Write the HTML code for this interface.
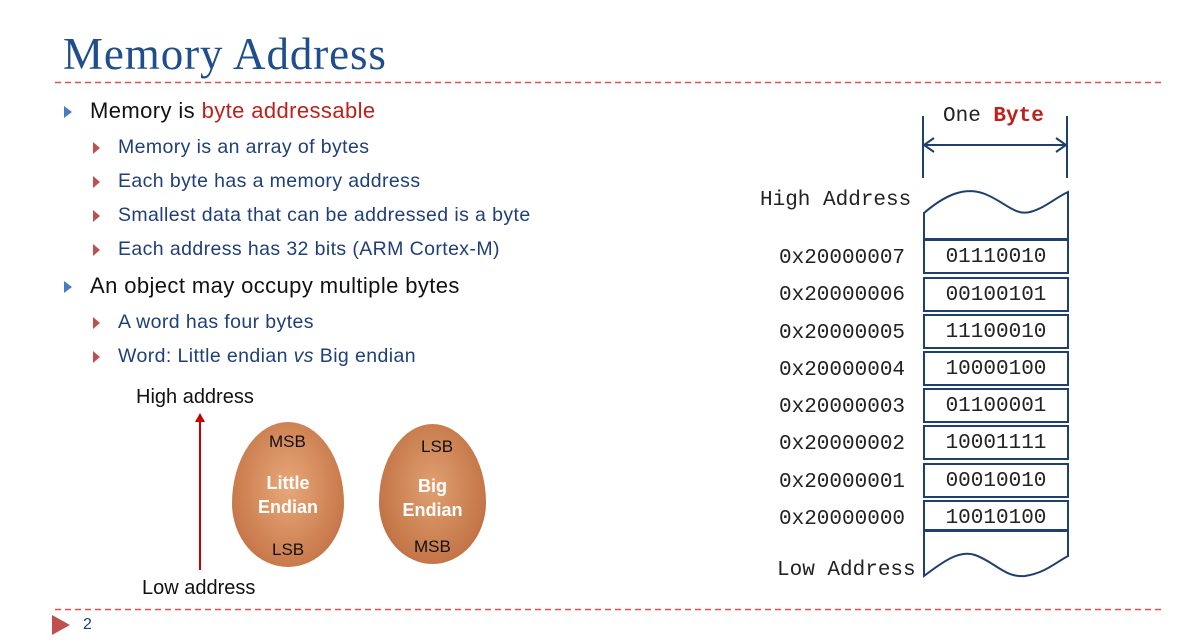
<!DOCTYPE html>
<html><head><meta charset="utf-8"><style>
body{margin:0;width:1190px;height:640px;background:#fff;position:relative;overflow:hidden;font-family:"Liberation Sans",sans-serif}
.a{position:absolute;white-space:nowrap}
.t{font-family:"Liberation Serif",serif;font-size:45px;letter-spacing:0.9px;color:#1f4e8c;left:63px;top:28px}
.l1{font-size:22px;color:#111;letter-spacing:0.4px}
.l2{font-size:19.5px;color:#1f3f7a;letter-spacing:0.4px}
.b1{width:0;height:0;border-top:6px solid transparent;border-bottom:6px solid transparent;border-left:8px solid #4a7cc0}
.b2{width:0;height:0;border-top:6px solid transparent;border-bottom:6px solid transparent;border-left:7px solid #c0504d}
.m{font-family:"Liberation Mono",monospace;font-size:21px;color:#222}
</style></head><body>
<div class="a t">Memory Address</div>

<div class="a b1" style="left:64px;top:106px"></div>
<div class="a l1" style="left:90px;top:98px">Memory is <span style="color:#c0201c">byte addressable</span></div>
<div class="a b2" style="left:93px;top:142px"></div><div class="a l2" style="left:118px;top:136px">Memory is an array of bytes</div>
<div class="a b2" style="left:93px;top:176px"></div><div class="a l2" style="left:118px;top:170px">Each byte has a memory address</div>
<div class="a b2" style="left:93px;top:210px"></div><div class="a l2" style="left:118px;top:204px">Smallest data that can be addressed is a byte</div>
<div class="a b2" style="left:93px;top:244px"></div><div class="a l2" style="left:118px;top:238px">Each address has 32 bits (ARM Cortex-M)</div>
<div class="a b1" style="left:64px;top:281px"></div>
<div class="a l1" style="left:90px;top:273px">An object may occupy multiple bytes</div>
<div class="a b2" style="left:93px;top:317px"></div><div class="a l2" style="left:118px;top:311px">A word has four bytes</div>
<div class="a b2" style="left:93px;top:351px"></div><div class="a l2" style="left:118px;top:345px">Word: Little endian <i>vs</i> Big endian</div>

<div class="a" style="left:136px;top:386px;font-size:20px;color:#111">High address</div>
<div class="a" style="left:142px;top:577px;font-size:20px;color:#111">Low address</div>
<div class="a" style="left:199px;top:420px;width:2px;height:150px;background:#c00"></div>
<div class="a" style="left:195px;top:413px;border-left:5px solid transparent;border-right:5px solid transparent;border-bottom:9px solid #c00"></div>

<div class="a" style="left:232px;top:422px;width:112px;height:145px;border-radius:50% 50% 50% 50%/56% 56% 44% 44%;background:radial-gradient(ellipse at 50% 45%,#e8a87a,#c97a4c 70%,#a95e34)"></div>
<div class="a" style="left:379px;top:424px;width:107px;height:140px;border-radius:50% 50% 50% 50%/56% 56% 44% 44%;background:radial-gradient(ellipse at 50% 45%,#e0a070,#c47648 70%,#a45a30)"></div>
<div class="a" style="left:269px;top:432px;font-size:17px;color:#111">MSB</div>
<div class="a" style="left:272px;top:540px;font-size:17px;color:#111">LSB</div>
<div class="a" style="left:232px;top:471px;width:112px;text-align:center;font-size:18px;font-weight:bold;color:#fff;line-height:24px">Little<br>Endian</div>
<div class="a" style="left:421px;top:437px;font-size:17px;color:#111">LSB</div>
<div class="a" style="left:414px;top:537px;font-size:17px;color:#111">MSB</div>
<div class="a" style="left:379px;top:474px;width:107px;text-align:center;font-size:18px;font-weight:bold;color:#fff;line-height:24px">Big<br>Endian</div>

<div class="a" style="left:52px;top:615px;border-top:10px solid transparent;border-bottom:10px solid transparent;border-left:18px solid #c0504d"></div>
<div class="a" style="left:83px;top:616px;font-size:16px;color:#1f3f7a">2</div>

<div class="a m" style="left:943px;top:105px">One <b style="color:#c0201c">Byte</b></div>
<div class="a m" style="left:760px;top:189px">High Address</div>
<div class="a m" style="left:777px;top:559px">Low Address</div>
<div class="a m" style="left:779px;top:240px;line-height:37.3px">0x20000007<br>0x20000006<br>0x20000005<br>0x20000004<br>0x20000003<br>0x20000002<br>0x20000001<br>0x20000000</div>

<svg class="a" style="left:0;top:0" width="1190" height="640">
<g stroke="#d9534f" stroke-width="1.5" stroke-dasharray="6 4">
<line x1="55" y1="82.5" x2="1162" y2="82.5"/>
<line x1="55" y1="609.5" x2="1162" y2="609.5"/>
</g>
<g fill="none" stroke="#1f3f6f" stroke-width="2">
<line x1="923" y1="116" x2="923" y2="178"/><line x1="1067" y1="116" x2="1067" y2="178"/>
<line x1="924" y1="145" x2="1066" y2="145"/>
<polyline points="934,138 924,145 934,152"/><polyline points="1056,138 1066,145 1056,152"/>
<path d="M924,213 C945,195 965,186 985,194 C1005,202 1015,216 1030,212 C1045,208 1055,198 1068,192 L1068,239 L924,239 Z"/>
<path d="M924,576 C945,560 960,550 975,555 C995,562 1005,578 1025,576 C1045,573 1055,563 1068,556 L1068,530 L924,530 Z"/>
</g>
<g fill="none" stroke="#1f3f6f" stroke-width="2">
<rect x="924" y="240" width="144" height="33"/>
<rect x="924" y="278" width="144" height="33"/>
<rect x="924" y="315" width="144" height="33"/>
<rect x="924" y="352" width="144" height="33"/>
<rect x="924" y="389" width="144" height="33"/>
<rect x="924" y="426" width="144" height="33"/>
<rect x="924" y="464" width="144" height="33"/>
<rect x="924" y="501" width="144" height="30"/>
</g>
<g font-family="Liberation Mono,monospace" font-size="21" fill="#222" text-anchor="middle">
<text x="996" y="262">01110010</text>
<text x="996" y="300">00100101</text>
<text x="996" y="337">11100010</text>
<text x="996" y="374">10000100</text>
<text x="996" y="411">01100001</text>
<text x="996" y="448">10001111</text>
<text x="996" y="486">00010010</text>
<text x="996" y="523">10010100</text>
</g>
</svg>
</body></html>
